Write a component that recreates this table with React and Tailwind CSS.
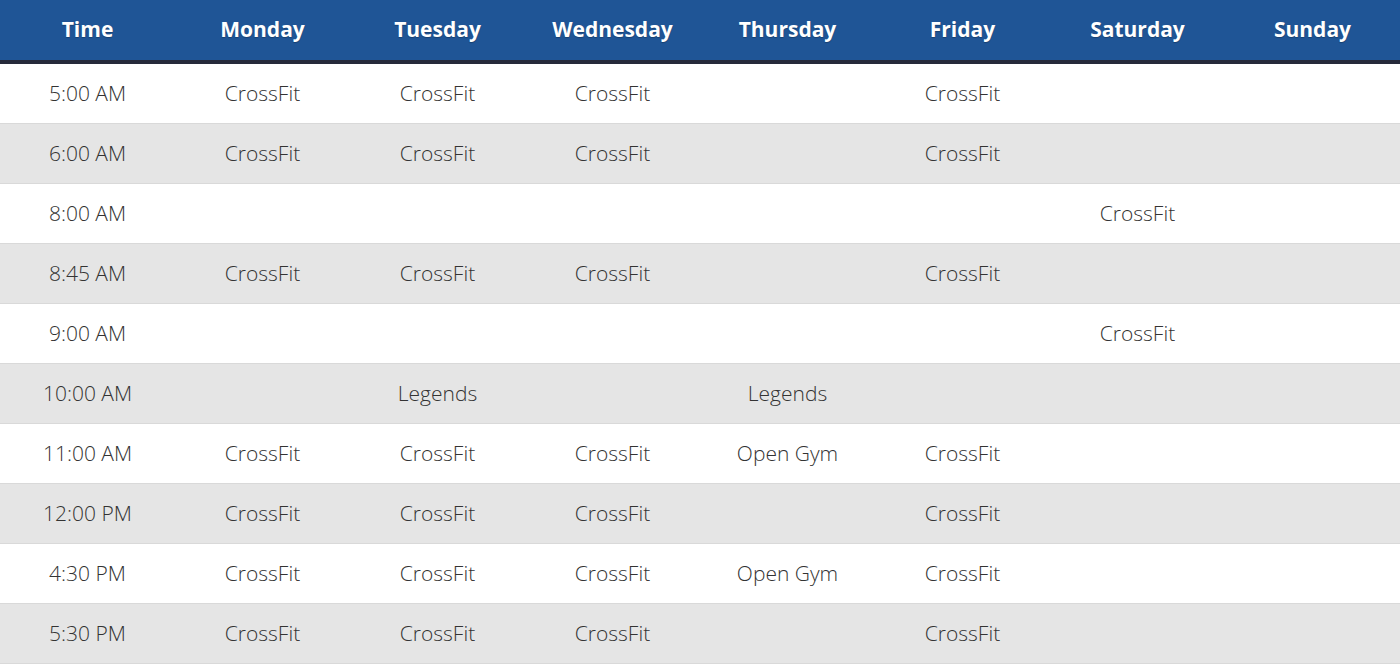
const days = ["Monday", "Tuesday", "Wednesday", "Thursday", "Friday", "Saturday", "Sunday"];

const cf = "CrossFit";
const og = "Open Gym";
const lg = "Legends";

const rows = [
  { time: "5:00 AM", classes: [cf, cf, cf, "", cf, "", ""] },
  { time: "6:00 AM", classes: [cf, cf, cf, "", cf, "", ""] },
  { time: "8:00 AM", classes: ["", "", "", "", "", cf, ""] },
  { time: "8:45 AM", classes: [cf, cf, cf, "", cf, "", ""] },
  { time: "9:00 AM", classes: ["", "", "", "", "", cf, ""] },
  { time: "10:00 AM", classes: ["", lg, "", lg, "", "", ""] },
  { time: "11:00 AM", classes: [cf, cf, cf, og, cf, "", ""] },
  { time: "12:00 PM", classes: [cf, cf, cf, "", cf, "", ""] },
  { time: "4:30 PM", classes: [cf, cf, cf, og, cf, "", ""] },
  { time: "5:30 PM", classes: [cf, cf, cf, "", cf, "", ""] },
];

export default function App() {
  return (
    <div className="w-[1400px] bg-white font-['Open_Sans',sans-serif]">
      {/* header */}
      <div className="grid h-[64px] grid-cols-8 border-b-4 border-[#262a3a] bg-[#1f5596]">
        {["Time", ...days].map((d) => (
          <div
            key={d}
            className="flex items-center justify-center text-[21px] font-bold text-white [text-shadow:0_1px_1px_rgba(0,0,0,0.25)]"
          >
            {d}
          </div>
        ))}
      </div>

      {/* rows */}
      {rows.map((r, i) => (
        <div
          key={r.time}
          className={`grid h-[60px] grid-cols-8 border-b border-[#d9d9d9] ${i % 2 === 0 ? "bg-white" : "bg-[#e5e5e5]"}`}
        >
          {[r.time, ...r.classes].map((c, j) => (
            <div key={j} className="flex items-center justify-center text-[21px] font-light text-[#333]">
              {c}
            </div>
          ))}
        </div>
      ))}
    </div>
  );
}
